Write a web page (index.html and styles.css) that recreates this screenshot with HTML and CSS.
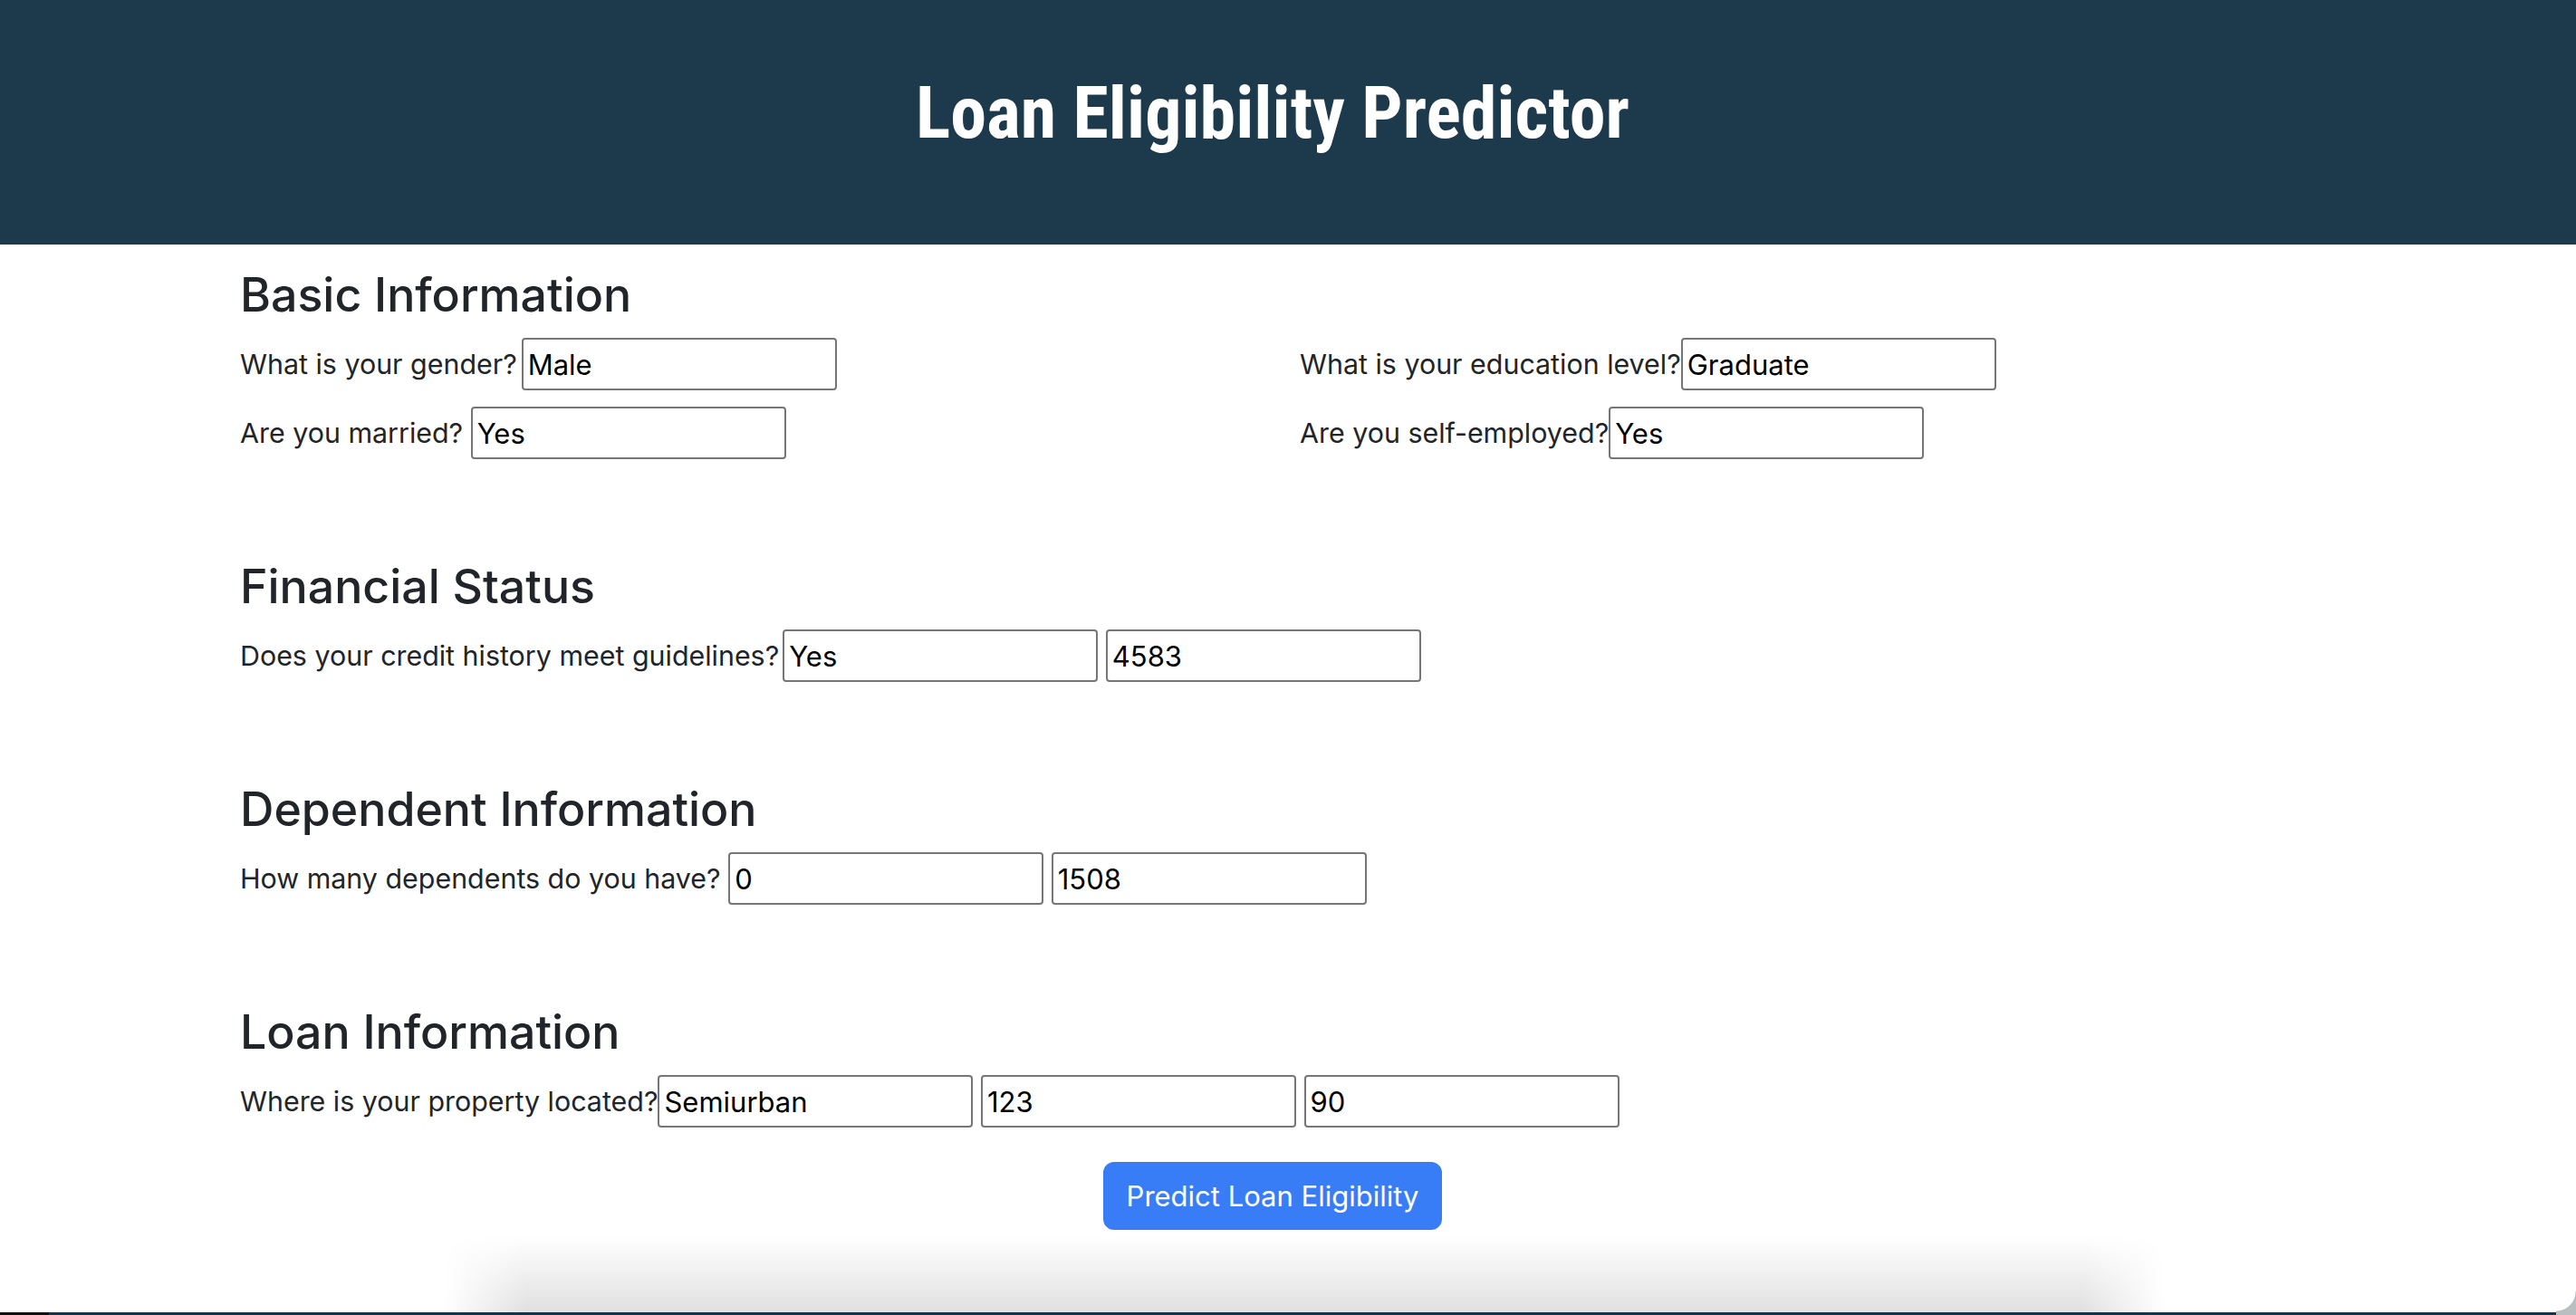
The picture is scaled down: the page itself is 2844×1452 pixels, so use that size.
FILE: index.html
```html
<!DOCTYPE html>
<html lang="en">
<head>
<meta charset="utf-8">
<title>Loan Eligibility Predictor</title>
<link rel="stylesheet" href="styles.css">
</head>
<body>
<header class="hero">
  <div class="hero-inner">
    <h1 class="title">Loan Eligibility Predictor</h1>
  </div>
</header>
<main class="container">
  <section class="group">
    <h3 class="group-title">Basic Information</h3>
    <div class="cols">
      <div class="col">
        <div class="field"><label class="label-tight">What is your gender?</label><input type="text" value="Male"></div>
        <div class="field"><label>Are you married?</label> <input type="text" value="Yes"></div>
      </div>
      <div class="col">
        <div class="field"><label>What is your education level?</label><input type="text" value="Graduate"></div>
        <div class="field"><label>Are you self-employed?</label><input type="text" value="Yes"></div>
      </div>
    </div>
  </section>
  <section class="group">
    <h3 class="group-title">Financial Status</h3>
    <div class="field"><label class="label-wide">Does your credit history meet guidelines?</label><input type="text" value="Yes"> <input type="text" value="4583"></div>
  </section>
  <section class="group">
    <h3 class="group-title">Dependent Information</h3>
    <div class="field"><label>How many dependents do you have?</label> <input type="text" value="0"> <input type="text" value="1508"></div>
  </section>
  <section class="group">
    <h3 class="group-title">Loan Information</h3>
    <div class="field"><label>Where is your property located?</label><input type="text" value="Semiurban"> <input type="text" value="123"> <input type="text" value="90"></div>
  </section>
  <div class="actions">
    <button class="btn" type="button">Predict Loan Eligibility</button>
  </div>
</main>
<div class="shade"></div>
<div class="strip"><span class="strip-dark"></span></div>
<div class="corner"></div>
</body>
</html>
```

FILE: styles.css
```css
html, body {
  margin: 0;
  padding: 0;
  height: 1452px;
  overflow: hidden;
  background: #ffffff;
}

body {
  position: relative;
  font-family: Inter, "Noto Sans", sans-serif;
  font-size: 30.4px;
  color: #212529;
}

.hero {
  background: #1c3a4c;
  height: 270px;
  box-sizing: border-box;
  padding-top: 77px;
}

.hero-inner,
.container {
  margin-left: 265px;
  width: 2280px;
}

.title {
  margin: 0;
  font-family: "Roboto Condensed", "Liberation Sans Narrow", "DejaVu Sans Condensed", Roboto, sans-serif;
  font-stretch: condensed;
  font-weight: 700;
  font-size: 80px;
  line-height: 96px;
  color: #ffffff;
  text-align: center;
}

.container {
  padding-top: 23px;
}

.group + .group {
  margin-top: 108px;
}

.group-title {
  margin: 0 0 16px;
  font-size: 51.8px;
  line-height: 64px;
  font-weight: 500;
  color: #212529;
}

.cols {
  display: grid;
  grid-template-columns: 1170px 1110px;
}

.field {
  height: 58px;
  line-height: 58px;
  white-space: nowrap;
}

.field + .field {
  margin-top: 18px;
}

.label-tight {
  margin-right: 5px;
}

.label-wide {
  margin-right: 4px;
}

.field input {
  vertical-align: top;
  box-sizing: border-box;
  width: 348px;
  height: 58px;
  margin: 0;
  padding: 0 5px;
  border: 2px solid #767676;
  border-radius: 4px;
  background: #ffffff;
  font-family: inherit;
  font-size: 31px;
  line-height: normal;
  color: #000000;
}

.actions {
  display: flex;
  justify-content: center;
  margin-top: 38px;
}

.btn {
  box-sizing: border-box;
  height: 75px;
  padding: 0 24px;
  border: 2px solid #387df6;
  border-radius: 12px;
  background: #387df6;
  color: #ffffff;
  font-family: inherit;
  font-size: 31px;
  line-height: 47px;
}

.shade {
  margin: 7px 0 0 490px;
  width: 1900px;
  height: 84px;
  background: linear-gradient(to bottom, rgba(0, 0, 0, 0), rgba(0, 0, 0, 0.12));
  -webkit-mask-image: linear-gradient(to right, transparent, #000 90px, #000 calc(100% - 90px), transparent);
  mask-image: linear-gradient(to right, transparent, #000 90px, #000 calc(100% - 90px), transparent);
}

.strip {
  display: flex;
  height: 3px;
  background: #0d3552;
}

.strip-dark {
  width: 54px;
  background: #111111;
}

.corner {
  position: absolute;
  right: 0;
  bottom: 0;
  width: 22px;
  height: 26px;
  background: radial-gradient(circle at 0 0, transparent 21px, #b9bec2 22px);
}
```
